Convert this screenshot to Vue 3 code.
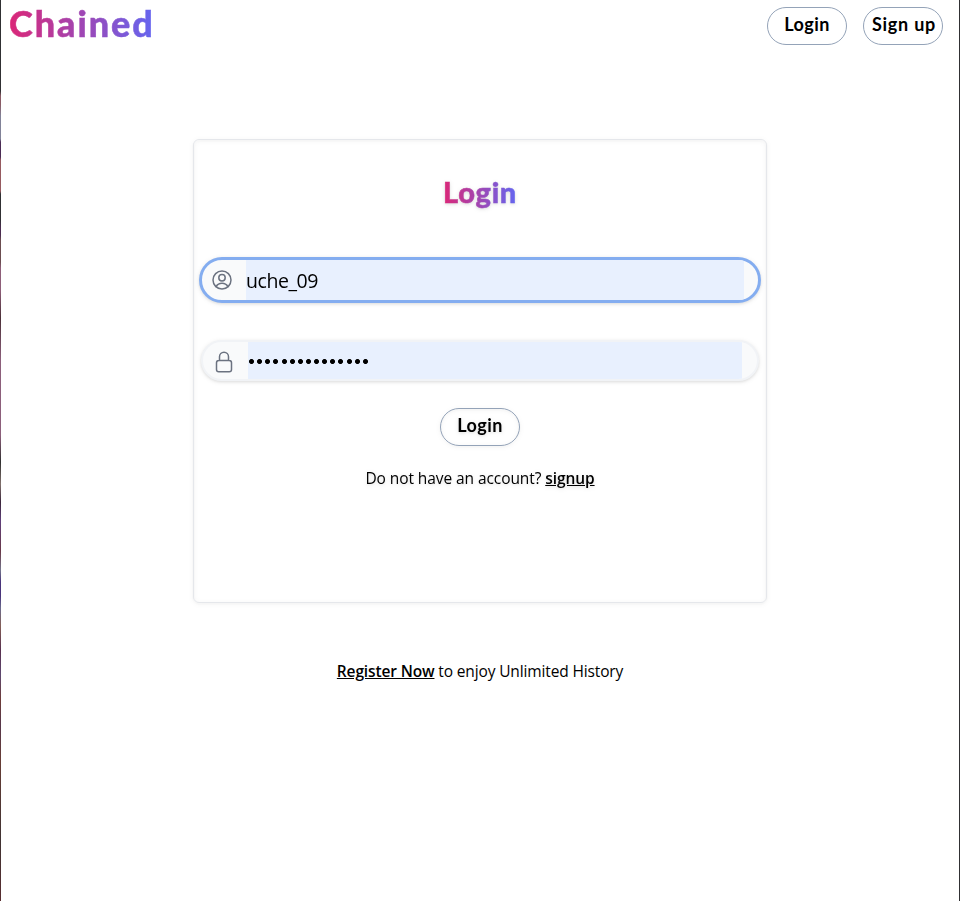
<script setup>
import { ref } from 'vue'

const username = ref('uche_09')
const passwordLength = 15
</script>

<template>
  <div class="window">
    <div class="edge edge-left"></div>
    <main class="page">
      <header class="topbar">
        <h1 class="brand"><span class="gradient">Chained</span></h1>
        <nav class="nav">
          <button class="pill"><span>Login</span></button>
          <button class="pill"><span class="signup">Sign up</span></button>
        </nav>
      </header>

      <section class="card">
        <h2 class="title"><span class="gradient">Login</span></h2>

        <div class="field focused">
          <span class="icon">
            <svg width="24" height="24" viewBox="0 0 24 24" fill="none" stroke="currentColor" stroke-width="1.5" stroke-linecap="round" stroke-linejoin="round">
              <circle cx="12" cy="12" r="9" />
              <circle cx="12" cy="9.75" r="3.2" />
              <path d="M6 18.7a7 7 0 0 1 12 0" />
            </svg>
          </span>
          <div class="value">{{ username }}</div>
        </div>

        <div class="field">
          <span class="icon lock">
            <svg width="24" height="24" viewBox="0 0 24 24" fill="none" stroke="currentColor" stroke-width="1.5" stroke-linecap="round" stroke-linejoin="round">
              <path d="M16.5 10.5V6.75a4.5 4.5 0 1 0-9 0v3.75m-.75 11.25h10.5a2.25 2.25 0 0 0 2.25-2.25v-6.75a2.25 2.25 0 0 0-2.25-2.25H6.75a2.25 2.25 0 0 0-2.25 2.25v6.75a2.25 2.25 0 0 0 2.25 2.25z" />
            </svg>
          </span>
          <div class="value dots"><i v-for="n in passwordLength" :key="n"></i></div>
        </div>

        <button class="pill submit"><span>Login</span></button>
        <p class="hint">Do not have an account? <a>signup</a></p>
      </section>

      <p class="register"><a>Register Now</a> to enjoy Unlimited History</p>
    </main>
    <div class="edge"></div>
  </div>
</template>

<style>
body {
  margin: 0;
  background: #fff;
}
</style>

<style scoped>
* {
  box-sizing: border-box;
}
.window {
  display: flex;
  width: 960px;
  height: 901px;
  overflow: hidden;
  color: #000;
  font-family: "Open Sans", "Noto Sans", sans-serif;
}
.edge {
  flex: none;
  width: 1px;
  background: #303033;
}
.edge-left {
  background: linear-gradient(#303033 0 91px, #8a5b65 96px 104px, #818298 116px 139px, #4b2c55 142px 157px, #965a60 160px 191px, #303033 194px 220px, #4b2c50 228px 235px, #6b4d50 240px 262px, #8e5e79 268px 290px, #4b3038 318px, #8c5f7b 360px 435px, #303030 462px, #81716d 484px, #3b263b 502px, #60407b 521px, #693848 551px, #74768c 570px, #49347b 582px 596px, #6b6b8d 608px, #845f57 626px, #58304f 650px, #5e4870 675px, #6e3c38 700px, #57374b 725px, #683d36 760px, #403333 840px, #592d30);
}
.page {
  display: flex;
  flex: 1;
  flex-direction: column;
  align-items: center;
}
.topbar {
  display: flex;
  justify-content: space-between;
  width: 100%;
  height: 139px;
  padding: 7px 16px 0 8px;
}
.brand,
.title {
  margin: 0;
  font-family: Lato, sans-serif;
  font-weight: 900;
}
.brand {
  height: 44px;
  font-size: 36px;
  line-height: 32px;
  letter-spacing: 1.95px;
}
.gradient {
  display: inline-block;
  background: linear-gradient(to right, #db2777, #6366f1);
  background-clip: text;
  -webkit-background-clip: text;
  color: transparent;
  -webkit-text-stroke: 0.5px transparent;
}
.nav {
  display: flex;
  gap: 16px;
}
.pill {
  display: flex;
  flex: none;
  align-items: center;
  justify-content: center;
  width: 80px;
  height: 38px;
  padding: 0 0 5px;
  border: 1px solid #94a3b8;
  border-radius: 19px;
  background: transparent;
  color: #000;
  font: 700 18px/24px Lato, sans-serif;
  letter-spacing: 0.4px;
  white-space: nowrap;
}
.signup {
  letter-spacing: 0.75px;
  margin-right: -2px;
}
.card {
  display: flex;
  flex: none;
  flex-direction: column;
  align-items: center;
  width: 574px;
  height: 464px;
  border: 1px solid #e5e7eb;
  border-radius: 6px;
  filter: drop-shadow(0 1px 2px rgb(0 0 0 / 0.1)) drop-shadow(0 1px 1px rgb(0 0 0 / 0.06));
}
.title {
  height: 117px;
  padding-top: 34px;
  font-size: 29px;
  line-height: 36px;
  letter-spacing: 0.7px;
}
.field {
  display: flex;
  flex: none;
  width: 558px;
  height: 41px;
  margin-bottom: 27px;
  overflow: hidden;
  border: 2px solid #f1f3f6;
  border-radius: 21px;
  background: #f9fafb;
}
.field.focused {
  width: 562px;
  height: 46px;
  margin-bottom: 37px;
  border: 3px solid #84adf0;
  border-radius: 23px;
}
.icon {
  display: flex;
  flex: none;
  align-items: center;
  width: 44px;
  padding: 0 0 0 8px;
  color: #6b7280;
}
.lock {
  width: 45px;
  padding: 2px 0 0 9px;
}
.value {
  width: 498px;
  background: #e8f0fe;
  font-size: 19.5px;
  line-height: 42px;
  letter-spacing: -0.45px;
}
.dots {
  display: flex;
  gap: 1.13px;
  align-items: center;
  width: 494px;
  padding: 2px 0 0;
}
.dots i {
  width: 7px;
  height: 7px;
  background: radial-gradient(circle, #000 2.1px, transparent 2.9px);
}
.hint,
.register {
  margin: 0;
  font-size: 15.5px;
  line-height: 24px;
  white-space: nowrap;
}
.hint {
  margin-top: 20px;
  letter-spacing: -0.08px;
}
.register {
  margin-top: 56px;
  letter-spacing: -0.14px;
}
a {
  font-weight: 600;
  text-decoration: underline;
  text-underline-offset: 1px;
}
</style>
